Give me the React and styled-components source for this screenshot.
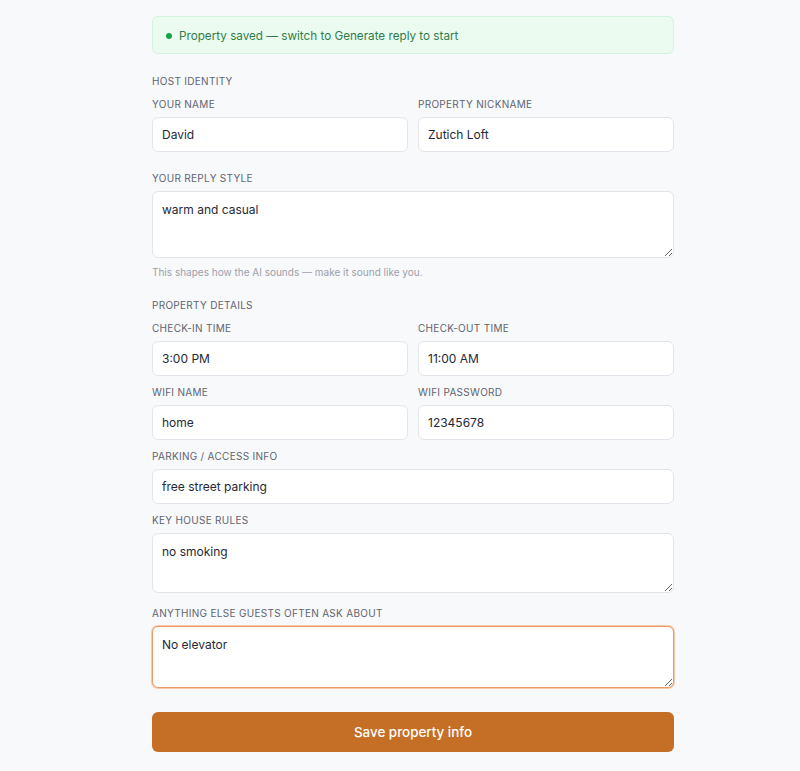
import React from "react";
import styled, { createGlobalStyle } from "styled-components";

const Global = createGlobalStyle`
  html, body { margin: 0; padding: 0; background: #f8f9fb; }
  body { font-family: Inter, "Noto Sans", sans-serif; color: #1f2937; }
  * { box-sizing: border-box; }
`;

const Page = styled.div`
  width: 522px;
  margin-left: 152px;
  padding: 16px 0 19px;
  display: flex;
  flex-direction: column;
`;

const Banner = styled.div`
  height: 38px;
  display: flex;
  align-items: center;
  gap: 7px;
  padding: 1px 13px 0;
  background: #ebfbf0;
  border: 1px solid #d3f3dd;
  border-radius: 6px;
  color: #2f7d4c;
  font-size: 11.7px;
  margin-bottom: 20px;
`;

const Dot = styled.span`
  width: 6px;
  height: 6px;
  border-radius: 50%;
  background: #16a34a;
`;

const Section = styled.div`
  font-size: 10px;
  line-height: 14px;
  letter-spacing: 0.3px;
  color: #5f6470;
  text-transform: uppercase;
  margin-bottom: ${(p) => p.$mb ?? 9}px;
`;

const Label = styled.label`
  display: block;
  font-size: 10px;
  line-height: 14px;
  letter-spacing: 0.3px;
  color: #5f6470;
  text-transform: uppercase;
  margin-bottom: 6px;
`;

const Row = styled.div`
  display: grid;
  grid-template-columns: 1fr 1fr;
  gap: 10px;
  margin-bottom: ${(p) => p.$mb ?? 9}px;
`;

const Field = styled.div`
  display: flex;
  flex-direction: column;
  margin-bottom: ${(p) => p.$mb ?? 0}px;
`;

const Input = styled.input`
  height: 35px;
  width: 100%;
  border: 1px solid #e3e5ea;
  border-radius: 6px;
  background: #fff;
  padding: 0 9px;
  font-family: Inter, "Noto Sans", sans-serif;
  font-size: 12px;
  color: #1f2937;
  outline: none;
`;

const Area = styled.textarea`
  display: block;
  height: ${(p) => p.$h}px;
  width: 100%;
  border: 1px solid ${(p) => (p.$focus ? "#ec9a68" : "#e3e5ea")};
  box-shadow: ${(p) => (p.$focus ? "0 0 0 1px #f6c9a9" : "none")};
  border-radius: 6px;
  background: #fff;
  padding: 10px 9px;
  font-family: Inter, "Noto Sans", sans-serif;
  font-size: 12px;
  line-height: 16px;
  color: #1f2937;
  outline: none;
  resize: vertical;
`;

const Hint = styled.div`
  font-size: 10px;
  line-height: 14px;
  color: #9aa0aa;
  margin-top: 7px;
  margin-bottom: 19px;
`;

const Button = styled.button`
  height: 40px;
  width: 100%;
  margin-top: 24px;
  border: none;
  border-radius: 6px;
  background: #c56f26;
  color: #fff;
  font-family: Inter, "Noto Sans", sans-serif;
  font-size: 13.4px;
  font-weight: 500;
`;

export default function App() {
  return (
    <>
      <Global />
      <Page>
        <Banner>
          <Dot />
          Property saved — switch to Generate reply to start
        </Banner>

        <Section $mb={9}>Host identity</Section>
        <Row $mb={19}>
          <Field>
            <Label>Your name</Label>
            <Input defaultValue="David" />
          </Field>
          <Field>
            <Label>Property nickname</Label>
            <Input defaultValue="Zutich Loft" />
          </Field>
        </Row>
        <Field>
          <Label>Your reply style</Label>
          <Area $h={67} defaultValue="warm and casual" />
        </Field>
        <Hint>This shapes how the AI sounds — make it sound like you.</Hint>

        <Section $mb={9}>Property details</Section>
        <Row>
          <Field>
            <Label>Check-in time</Label>
            <Input defaultValue="3:00 PM" />
          </Field>
          <Field>
            <Label>Check-out time</Label>
            <Input defaultValue="11:00 AM" />
          </Field>
        </Row>
        <Row>
          <Field>
            <Label>Wifi name</Label>
            <Input defaultValue="home" />
          </Field>
          <Field>
            <Label>Wifi password</Label>
            <Input defaultValue="12345678" />
          </Field>
        </Row>
        <Field $mb={9}>
          <Label>Parking / access info</Label>
          <Input defaultValue="free street parking" />
        </Field>
        <Field $mb={13}>
          <Label>Key house rules</Label>
          <Area $h={60} defaultValue="no smoking" />
        </Field>
        <Field>
          <Label>Anything else guests often ask about</Label>
          <Area $h={62} $focus defaultValue="No elevator" />
        </Field>
        <Button>Save property info</Button>
      </Page>
    </>
  );
}
